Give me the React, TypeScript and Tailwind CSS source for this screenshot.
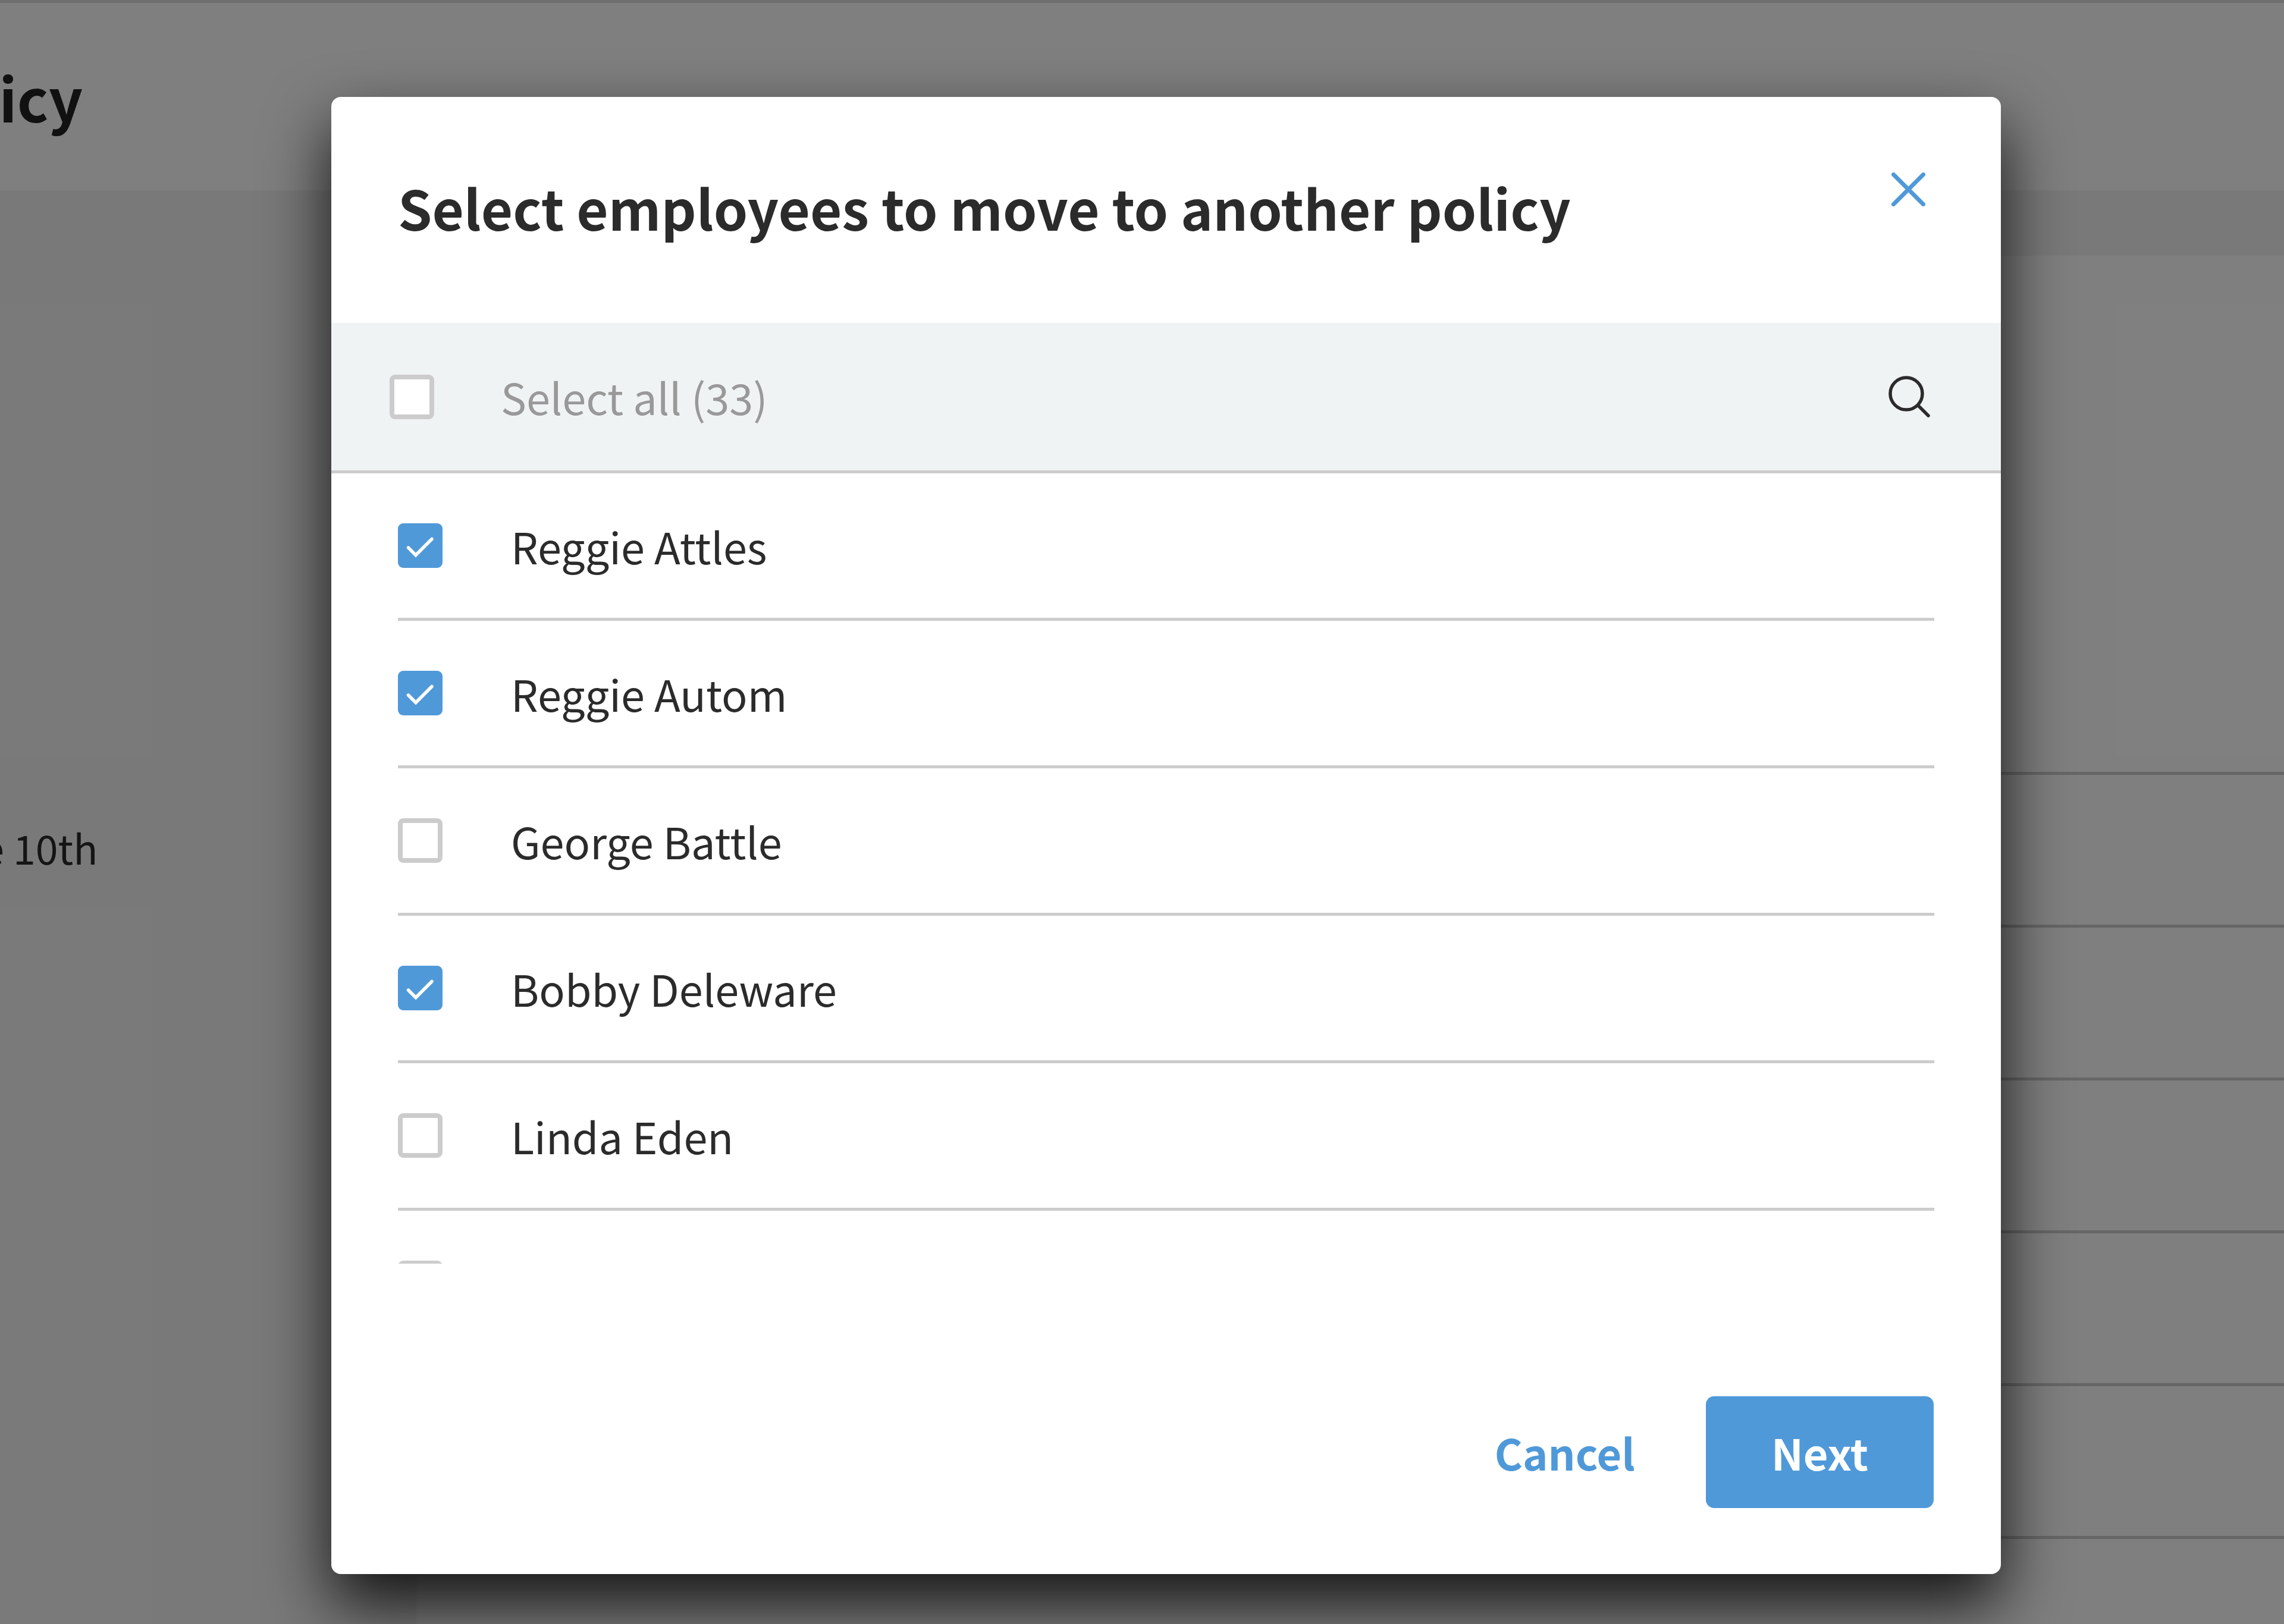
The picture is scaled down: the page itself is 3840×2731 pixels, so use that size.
const font = { fontFamily: '"Noto Sans CJK SC", "Noto Sans", sans-serif' };

function Checkbox({ checked = false }: { checked?: boolean }) {
  if (checked) {
    return (
      <div className="h-[75px] w-[75px] shrink-0 rounded-[9px] bg-[#4f99d9]">
        <svg viewBox="0 0 75 75" className="h-full w-full" fill="none" stroke="#ffffff" strokeWidth="5.5" strokeLinecap="round" strokeLinejoin="miter">
          <path d="M17.5 41 L30 53.5 L57 26.5" />
        </svg>
      </div>
    );
  }
  return <div className="h-[75px] w-[75px] shrink-0 rounded-[9px] border-[8px] border-[#cccccc] bg-white" />;
}

const people: [string, boolean][] = [
  ["Reggie Attles", true],
  ["Reggie Autom", true],
  ["George Battle", false],
  ["Bobby Deleware", true],
  ["Linda Eden", false],
  ["", false],
];

const pageRows = ["", "", "", "", "", "", ""];

export default function App() {
  return (
    <div style={font} className="relative h-[2731px] w-[3840px] overflow-hidden bg-white text-[#2b2b2b]">
      <div className="h-[5px] bg-[#dedede]" />
      <div className="flex h-[315px] items-center">
        <h1 className="ml-[-160px] text-[100px] font-bold leading-none text-[#222222]">Policy</h1>
      </div>
      <div className="flex h-[2411px]">
        <div className="w-[700px] shrink-0 bg-[#f3f3f3] pt-[1045px]">
          <div className="ml-[-150px] text-[68px] leading-[120px]">June 10th</div>
        </div>
        <div className="flex-1">
          <div className="h-[110px] bg-[#f3f3f3]" />
          <div className="h-[616px]" />
          {pageRows.map((_, i) => (
            <div key={i} className="h-[257px] border-b-[5px] border-[#cccccc]" />
          ))}
          <div className="pl-[140px] pt-[92px] text-[68px] leading-none">Marcus Fischer</div>
        </div>
      </div>

      <div className="absolute inset-0 bg-black/50">
        <div className="absolute left-[557px] top-[163px] flex h-[2484px] w-[2807px] flex-col overflow-hidden rounded-[16px] bg-white shadow-[0_50px_110px_rgba(0,0,0,0.85)]">
          <div className="flex h-[380px] shrink-0 items-start justify-between px-[112px] pt-[120px]">
            <h2 className="text-[92px] font-bold leading-[130px] text-[#2b2b2b]">Select employees to move to another policy</h2>
            <svg viewBox="0 0 57 57" className="mr-[15px] mt-[7px] h-[57px] w-[57px]" fill="none" stroke="#4f99d9" strokeWidth="7" strokeLinecap="round">
              <path d="M3.5 3.5 L53.5 53.5 M53.5 3.5 L3.5 53.5" />
            </svg>
          </div>
          <div className="flex h-[253px] shrink-0 items-center border-b-[5px] border-[#cccccc] bg-[#f0f3f4] pl-[98px] pr-[119px]">
            <Checkbox />
            <span className="ml-[112px] flex-1 text-[72px] leading-none text-[#999999]">Select all (33)</span>
            <svg viewBox="0 0 70 70" className="h-[70px] w-[70px]" fill="none" stroke="#2b2b2b" strokeWidth="5.5" strokeLinecap="round">
              <circle cx="30" cy="30" r="27" />
              <path d="M50 50 L67 67" />
            </svg>
          </div>
          <div className="h-[1329px] shrink-0 overflow-hidden px-[112px]">
            {people.map(([name, checked], i) => (
              <div key={i} className="flex h-[248px] items-center border-b-[5px] border-[#cccccc]">
                <Checkbox checked={checked} />
                <span className="ml-[115px] text-[72px] leading-none text-[#2b2b2b]">{name}</span>
              </div>
            ))}
          </div>
          <div className="flex flex-1 items-start justify-end px-[113px] pt-[223px]">
            <div className="flex items-center gap-[119px]">
              <span className="text-[72px] font-bold leading-none text-[#4f99d9]">Cancel</span>
              <button className="flex h-[188px] w-[383px] items-center justify-center rounded-[14px] bg-[#4f99d9] text-[72px] font-bold leading-none text-white">Next</button>
            </div>
          </div>
        </div>
      </div>
    </div>
  );
}
